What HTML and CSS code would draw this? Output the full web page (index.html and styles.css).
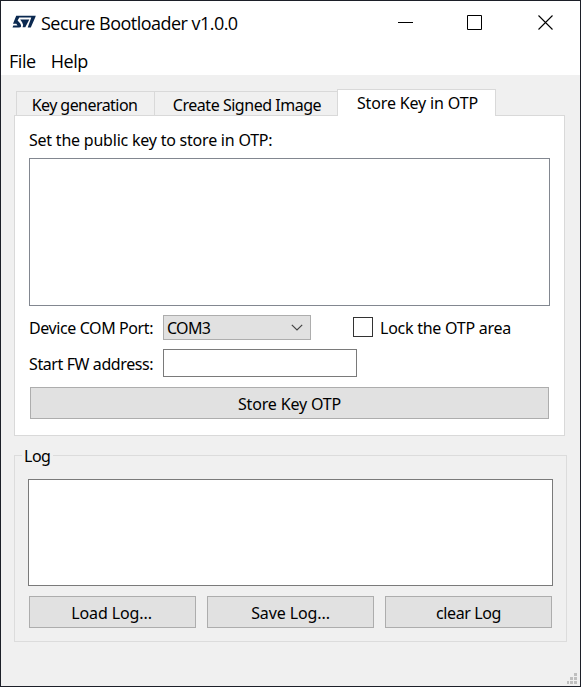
FILE: index.html
```html
<!DOCTYPE html>
<html lang="en">
<head>
<meta charset="utf-8">
<title>Secure Bootloader v1.0.0</title>
<link rel="stylesheet" href="styles.css">
</head>
<body>
<div class="window">
  <header class="titlebar">
    <svg class="logo" width="25" height="14" viewBox="0 0 25 14"><path fill="#0b2950" d="M4.200 .8H23.800L23.200 2.500H7.300L5.600 5.500L8.300 8.500Q10.500 12.500 7 12.500H.5L1.300 10.600H5.500L4.300 8.700H1Z M8.200 4.500H17.300L13.300 12.300H10.600Q11.600 9.500 10.200 7.600Z M19.300 2.500H23.200L18.800 12.500H15.700Z"/></svg>
    <h1 class="title">Secure Bootloader v1.0.0</h1>
    <svg class="controls" width="156" height="16" viewBox="0 0 156 16" fill="none" stroke="#000"><path d="M0 7.500H15M69.500 .5H83.500V14.500H69.500Z"/><path d="M140.500 .5L154.500 14.500M154.500 .5L140.500 14.500" stroke-width="1.100"/></svg>
  </header>
  <nav class="menubar"><span class="m-file">File</span><span class="m-help">Help</span></nav>
  <main class="client">
    <div class="tabs">
      <div class="tab tab-gen"><span>Key generation</span></div>
      <div class="tab tab-sign"><span>Create Signed Image</span></div>
      <div class="tab active"><span>Store Key in OTP</span></div>
    </div>
    <section class="pane">
      <label class="key-label">Set the public key to store in OTP:</label>
      <div class="key-box"></div>
      <div class="row port-row">
        <span class="label port">Device COM Port:</span>
        <div class="combo"><span>COM3</span><svg width="12" height="7" viewBox="0 0 12 7" fill="none" stroke="#444" stroke-width="1.200"><path d="M.8 .8L6 6L11.200 .8"/></svg></div>
        <i class="check"></i><span class="lock">Lock the OTP area</span>
      </div>
      <div class="row fw-row">
        <span class="label fw">Start FW address:</span>
        <div class="address"></div>
      </div>
      <div class="button store"><span>Store Key OTP</span></div>
    </section>
    <fieldset class="group">
      <legend>Log</legend>
      <div class="log-box"></div>
      <div class="buttons">
        <div class="button load"><span>Load Log...</span></div>
        <div class="button save"><span>Save Log...</span></div>
        <div class="button clear"><span>clear Log</span></div>
      </div>
    </fieldset>
  </main>
  <svg class="grip" width="10" height="11" viewBox="0 0 10 11" fill="#bfbfbf"><path d="M7 0h3v3h-3zM3 4h3v3h-3zM7 4h3v3h-3zM0 8h2v3h-2zM3 8h3v3h-3zM7 8h3v3h-3z"/></svg>
</div>
</body>
</html>
```
FILE: styles.css
```css
* { box-sizing: border-box; }
body { margin: 0; background: #fff; overflow: hidden; font: 16px/20px "Noto Sans", "Open Sans", sans-serif; color: #000; }
span, label, legend, h1 { white-space: nowrap; }
.window { position: relative; width: 581px; height: 687px; border: 1px solid #1c1f28; background: #f0f0f0; }
.titlebar { display: flex; align-items: center; height: 44px; padding-left: 11px; background: #fff; }
.logo { margin-top: -2px; }
.title { margin: 0 0 0 4px; width: 357px; font: 18px/24px "Open Sans", sans-serif; letter-spacing: -.53px; }
.controls { margin-top: -1px; }
.menubar { display: flex; height: 30px; padding: 4px 0 0 8px; gap: 15px; background: #fff; font: 18px/24px "Open Sans", sans-serif; letter-spacing: -.45px; }
.client { padding: 14px 13px 0; }
.tabs { display: flex; align-items: flex-end; height: 27px; padding-left: 2px; position: relative; z-index: 1; }
.tab { height: 25px; border: 1px solid #d9d9d9; text-align: center; padding-top: 3px; letter-spacing: -.47px; }
.tab-gen { width: 138px; border-right: 0; padding-right: 2px; letter-spacing: -.55px; }
.tab-sign { width: 185px; border-right: 0; }
.tab.active { width: 159px; margin-left: -2px; height: 27px; padding-left: 2px; background: #fff; border-bottom: 0; letter-spacing: -.15px; }
.pane { width: 551px; height: 321px; margin-top: -1px; border: 1px solid #d9d9d9; background: #fff; padding: 14px 14px 0; }
.key-label { display: block; height: 28px; letter-spacing: -.22px; }
.key-box { width: 521px; height: 148px; border: 1px solid #828790; }
.row { display: flex; }
.label { width: 134px; letter-spacing: -.4px; }
.port-row { height: 25px; margin-top: 9px; line-height: 27px; }
.combo { display: flex; align-items: center; justify-content: space-between; width: 148px; height: 25px; padding: 0 7px 0 3px; border: 1px solid #adadad; background: #e1e1e1; letter-spacing: -.7px; }
.combo span { padding-top: 1px; }
.check { width: 20px; height: 20px; margin: 2px 0 0 42px; border: 1px solid #333; }
.lock { margin-left: 7px; letter-spacing: -.25px; }
.fw-row { height: 28px; margin-top: 9px; line-height: 31px; }
.address { width: 194px; height: 28px; border: 1px solid #7a7a7a; }
.button { display: flex; align-items: center; justify-content: center; height: 32px; padding-top: 2px; border: 1px solid #adadad; background: #e1e1e1; letter-spacing: -.1px; }
.store { width: 519px; margin: 10px 0 0 1px; letter-spacing: -.17px; }
.group { position: relative; width: 553px; height: 187px; margin: 19px 0 0; padding: 23px 13px 0; border: 1px solid #dcdcdc; }
.group legend { position: absolute; left: 7px; top: -10px; padding: 0 3px 0 2px; background: #f0f0f0; letter-spacing: -.5px; }
.log-box { width: 525px; height: 107px; border: 1px solid #7a7a7a; background: #fff; }
.buttons { display: flex; gap: 11px; margin: 10px 0 0 1px; }
.buttons .button { width: 167px; }
.buttons .load { padding-right: 2px; }
.buttons .clear { letter-spacing: -.4px; }
.grip { position: absolute; right: 3px; bottom: 2px; }
```
